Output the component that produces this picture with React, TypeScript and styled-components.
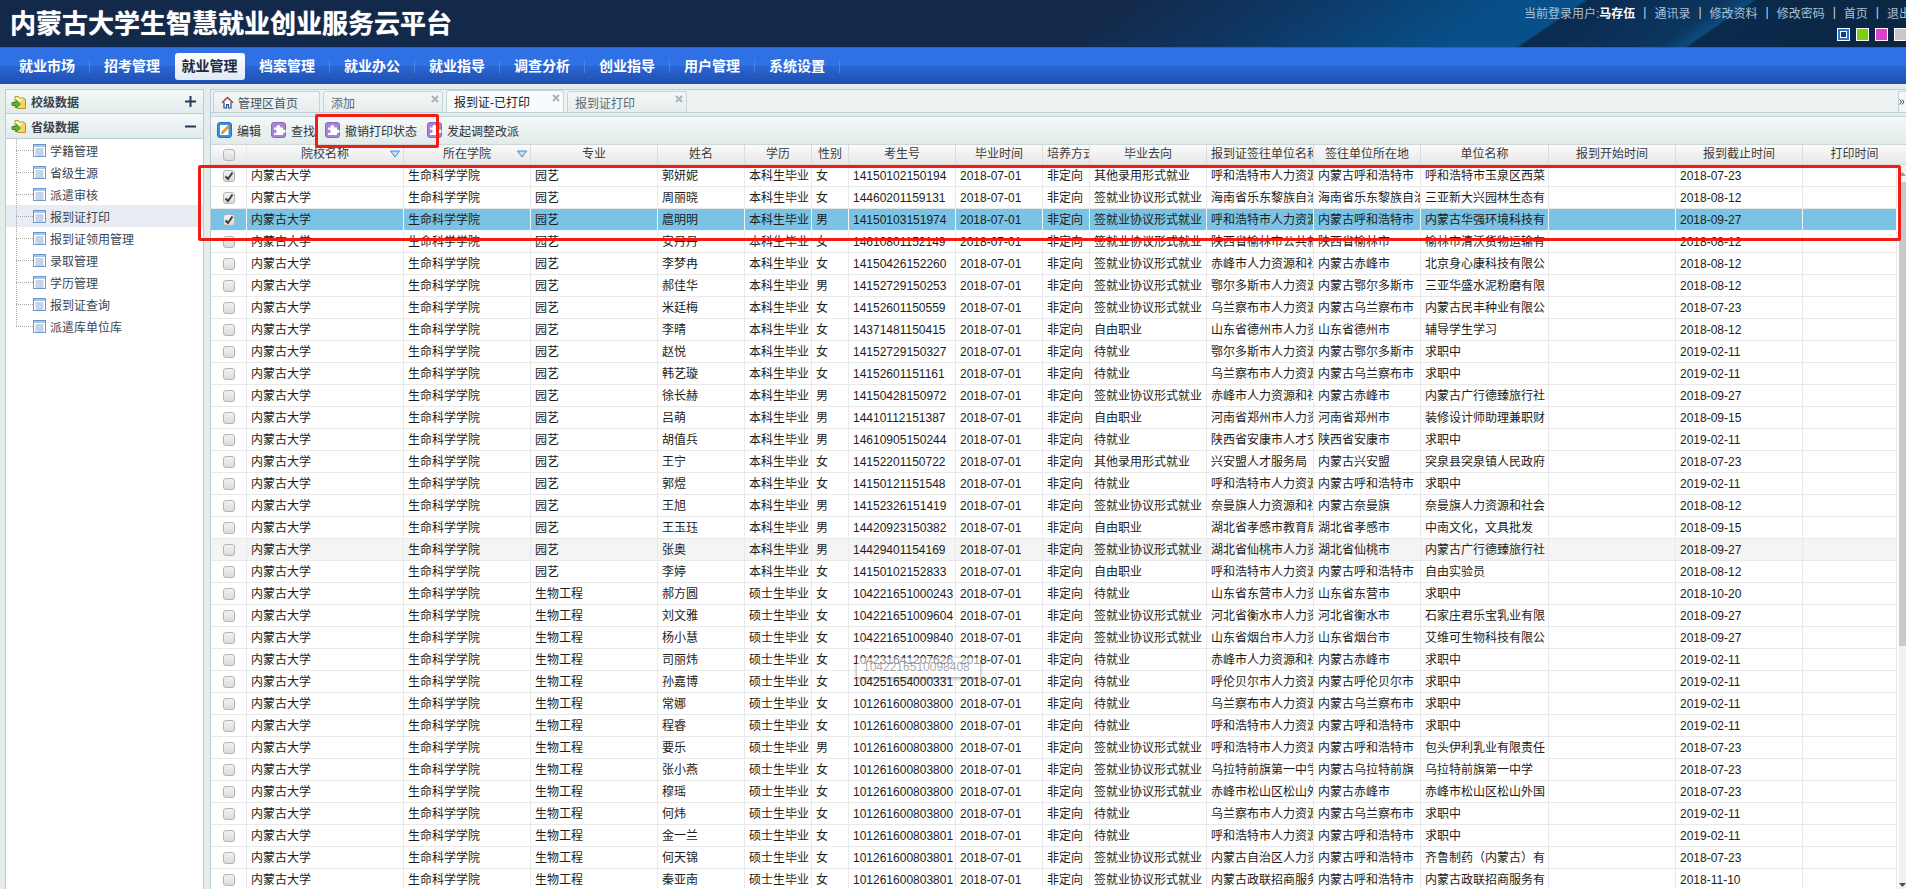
import React from 'react';
import styled, { createGlobalStyle } from 'styled-components';

const GlobalStyle = createGlobalStyle`
    html, body {
        margin: 0;
        padding: 0;
        height: 100%;
        overflow: hidden;
        background: #e4ecec;
        font-family: "Liberation Sans", "Noto Sans CJK SC", sans-serif;
        font-size: 12px;
        color: #222;
    }
    #root { height: 100%; }
`;

const Page = styled.div`
    position: relative;
    display: flex;
    flex-direction: column;
    height: 889px;
    overflow: hidden;
`;

const TopBar = styled.div`
    flex: none;
    box-sizing: border-box;
    height: 48px;
    display: flex;
    justify-content: space-between;
    overflow: hidden;
    border-bottom: 1px solid #46617e;
    background: linear-gradient(145.6deg, #13294a 0, #13294a 640px, #0e3866 740px, #07508a 860px, #07508a 895px, #0b2a4e 898px, #0b3660 975px, #0d4a7c 990px, #0a2a4c 993px, #0a2542 100%);
`;

const Title = styled.h1`
    margin: 0;
    padding-left: 10px;
    font-size: 26px;
    line-height: 49px;
    font-weight: 700;
    color: #fff;
    white-space: nowrap;
    text-shadow: 0 0 1px rgba(255,255,255,0.7);
`;

const UserBlock = styled.div`
    display: flex;
    flex-direction: column;
    align-items: flex-end;
    margin-right: -5px;
`;

const UserLinks = styled.div`
    display: flex;
    align-items: center;
    height: 24px;
    color: #a9c2d6;
    white-space: nowrap;
`;

const UserName = styled.b`
    color: #fff;
`;

const LinkSep = styled.span`
    margin: 0 8px;
    color: #c8d8e4;
`;

const Swatches = styled.div`
    display: flex;
    gap: 6px;
    margin-top: 4px;
    margin-right: 4px;
`;

const Swatch = styled.span<{ $color: string; $current?: boolean }>`
    box-sizing: border-box;
    width: 13px;
    height: 13px;
    border: 1px solid #fff;
    background: ${p => p.$color};
    display: flex;
    align-items: center;
    justify-content: center;
    &::after {
        content: "";
        display: ${p => (p.$current ? 'block' : 'none')};
        width: 5px;
        height: 5px;
        border: 1px solid #fff;
        background: #0e3f80;
    }
`;

const Nav = styled.div`
    flex: none;
    height: 36px;
    display: flex;
    align-items: center;
    padding-left: 5px;
    background: linear-gradient(#2f70e4 0, #2f70e4 50%, #2a66d4 50%, #1f4fae 100%);
`;

const NavCell = styled.div<{ $sep?: boolean; $active?: boolean }>`
    box-sizing: border-box;
    width: ${p => (p.$active ? 70 : 85)}px;
    height: 14px;
    display: flex;
    align-items: center;
    justify-content: center;
    border-right: 1px solid ${p => (p.$sep ? '#4f7fd8' : 'transparent')};
`;

const NavLabel = styled.span<{ $active?: boolean }>`
    padding: 6px 7px;
    font-size: 14px;
    line-height: 15px;
    font-weight: 700;
    white-space: nowrap;
    border-radius: 3px;
    color: ${p => (p.$active ? '#1d2a3c' : '#fff')};
    background: ${p => (p.$active ? 'linear-gradient(#ffffff, #dfe9f7)' : 'none')};
`;

const Main = styled.div`
    flex: 1;
    min-height: 0;
    display: flex;
    gap: 6px;
    padding: 5px 0 0 5px;
`;

const Sidebar = styled.div`
    flex: none;
    box-sizing: border-box;
    width: 199px;
    border: 1px solid #b7ccd3;
    border-bottom: 0;
    background: #fff;
`;

const AccordionHead = styled.div`
    box-sizing: border-box;
    height: 25px;
    display: flex;
    align-items: center;
    gap: 4px;
    padding: 0 7px 0 5px;
    border-bottom: 1px solid #b7ccd3;
    background: linear-gradient(#f6f9f9, #e2ebeb);
    color: #39424c;
    font-weight: 700;
    &:first-of-type { height: 24px; }
`;

const AccordionLabel = styled.span`
    flex: 1;
`;

const TreeRow = styled.div<{ $selected?: boolean; $last?: boolean }>`
    height: 22px;
    display: flex;
    align-items: center;
    background: ${p => (p.$selected ? '#e8edf3' : 'transparent')};
    color: #3c4652;
    &::before {
        content: "";
        flex: none;
        width: 17px;
        height: 100%;
        margin-left: 10px;
        background:
            repeating-linear-gradient(to right, #aaa 0 1px, transparent 1px 2px) 0 50% / 100% 1px no-repeat,
            repeating-linear-gradient(to bottom, #aaa 0 1px, transparent 1px 2px) 0 0 / 1px ${p => (p.$last ? '50%' : '100%')} no-repeat;
    }
`;

const TreeText = styled.span`
    margin-left: 4px;
`;

const Content = styled.div`
    flex: 1;
    min-width: 0;
    display: flex;
    flex-direction: column;
    border-left: 1px solid #b7ccd3;
    border-top: 1px solid #b7ccd3;
`;

const TabBar = styled.div`
    flex: none;
    box-sizing: border-box;
    height: 22px;
    display: flex;
    align-items: flex-end;
    gap: 3px;
    padding-left: 2px;
    background: #edf3f3;
`;

const Tab = styled.div<{ $active?: boolean; $width: number }>`
    position: relative;
    box-sizing: border-box;
    width: ${p => p.$width}px;
    height: ${p => (p.$active ? 22 : 21)}px;
    display: flex;
    align-items: center;
    gap: 4px;
    padding-left: 7px;
    border: 1px solid #c3d4d9;
    border-bottom: 0;
    border-radius: 3px 3px 0 0;
    color: ${p => (p.$active ? '#222' : '#5e6873')};
    background: ${p => (p.$active ? '#f8fbfb' : 'linear-gradient(#f4f7f7, #e6eded)')};
    white-space: nowrap;
`;

const HomeTabText = styled.span`
    color: #4a5561;
`;

const TabClose = styled.svg`
    position: absolute;
    top: 3px;
    right: 3px;
    width: 8px;
    height: 8px;
`;

const TabScroller = styled.div`
    margin-left: auto;
    box-sizing: border-box;
    width: 8px;
    height: 21px;
    overflow: hidden;
    border-left: 1px solid #c3d4d9;
    border-top: 1px solid #c3d4d9;
    background: #f4f7f7;
    display: flex;
    align-items: center;
`;

const TabStrip = styled.div`
    flex: none;
    box-sizing: border-box;
    height: 5px;
    border-top: 1px solid #bfd0d5;
    border-bottom: 1px solid #c6d5d9;
    background: #e4ecec;
`;

const Toolbar = styled.div`
    flex: none;
    box-sizing: border-box;
    height: 27px;
    display: flex;
    align-items: center;
    gap: 10px;
    padding: 0 0 1px 6px;
    background: linear-gradient(#f4f8f8, #e2ebeb);
`;

const ToolButton = styled.div`
    display: flex;
    align-items: center;
    gap: 5px;
    color: #333;
    white-space: nowrap;
`;

const COLUMNS = '36px 157px 127px 127px 87px 67px 37px 107px 87px 47px 117px 107px 107px 128px 127px 127px 1fr';

const HeaderRow = styled.div`
    flex: none;
    box-sizing: border-box;
    height: 21px;
    display: grid;
    grid-template-columns: ${COLUMNS};
    border-top: 1px solid #ccd8da;
    border-bottom: 1px solid #dcdcdc;
    background: linear-gradient(#fbfbfb, #e7e7e7);
`;

const HeaderCell = styled.div`
    position: relative;
    padding: 0 4px;
    line-height: 19px;
    text-align: center;
    color: #3b3b3b;
    white-space: nowrap;
    overflow: hidden;
    border-right: 1px solid #dcdcdc;
    &:last-child { border-right: 0; }
`;

const SortMark = styled.svg`
    position: absolute;
    top: 5px;
    right: 3px;
    width: 10px;
    height: 8px;
`;

const BodyArea = styled.div`
    flex: 1;
    min-height: 0;
    display: flex;
`;

const Rows = styled.div`
    flex: 1;
    min-width: 0;
    overflow: hidden;
    background: #fff;
`;

const Row = styled.div<{ $selected?: boolean; $hover?: boolean }>`
    box-sizing: border-box;
    height: 22px;
    margin-right: 2px;
    display: grid;
    grid-template-columns: ${COLUMNS};
    border-bottom: 1px solid ${p => (p.$selected ? '#f2f7fa' : '#e9e9e9')};
    background: ${p => (p.$selected ? '#7bc3e5' : p.$hover ? '#f4f4f4' : '#fff')};
`;

const Cell = styled.div<{ $selected?: boolean }>`
    padding: 0 4px;
    height: 21px;
    line-height: 22px;
    color: #1c1c1c;
    white-space: nowrap;
    overflow: hidden;
    border-right: 1px solid ${p => (p.$selected ? '#f2f7fa' : '#e9e9e9')};
`;

const CheckCell = styled.div<{ $selected?: boolean }>`
    display: flex;
    align-items: center;
    justify-content: center;
    border-right: 1px solid ${p => (p.$selected ? '#f2f7fa' : '#e9e9e9')};
`;

const CheckBox = styled.span`
    box-sizing: border-box;
    width: 12px;
    height: 12px;
    display: flex;
    align-items: center;
    justify-content: center;
    border: 1px solid #b4b4b4;
    border-radius: 3px;
    background: linear-gradient(#f2f2f2, #dcdcdc);
`;

const Scrollbar = styled.div`
    flex: none;
    width: 7px;
    display: flex;
    flex-direction: column;
    background: #f1f1f1;
`;

const ScrollArrow = styled.svg`
    flex: none;
    width: 7px;
    height: 17px;
`;

const ScrollThumb = styled.div`
    flex: none;
    height: 464px;
    background: #c9c9c9;
`;

const ScrollTrack = styled.div`
    flex: 1;
`;

/* the two red marks somebody drew on the screenshot */
const ButtonMark = styled.div`
    position: absolute;
    box-sizing: border-box;
    left: 315px;
    top: 114px;
    width: 124px;
    height: 34px;
    border: 3px solid #f21c12;
    border-radius: 2px;
`;

const RowsMark = styled.div`
    position: absolute;
    box-sizing: border-box;
    left: 198px;
    top: 165px;
    width: 1703px;
    height: 76px;
    border: 3px solid #f21c12;
    border-radius: 2px;
`;

const DragTip = styled.div`
    position: absolute;
    box-sizing: border-box;
    left: 857px;
    top: 658px;
    width: 123px;
    height: 19px;
    padding-left: 6px;
    line-height: 19px;
    color: rgba(90,90,90,0.55);
    background: rgba(255,255,255,0.55);
    box-shadow: 0 1px 4px rgba(0,0,0,0.45);
`;

const FolderIcon = () => (
    <svg width="16" height="16" viewBox="0 0 16 16">
        <path d="M4 2.5h3.5l1 1.5h4v9.5H4Z" fill="#fdf0b8" stroke="#b8962c" />
        <path d="M12.5 4l2 1.5v9H6.5l-1-1" fill="#f4d468" stroke="#b8962c" />
        <path d="M1 8.5h4V6l4.5 4-4.5 4v-2.5H1Z" fill="#58b82c" stroke="#2c7a14" strokeWidth="0.8" />
    </svg>
);

const PlusIcon = () => (
    <svg width="11" height="11" viewBox="0 0 11 11">
        <path d="M0 5.5h11M5.5 0v11" stroke="#1f3a5c" strokeWidth="2" />
    </svg>
);

const MinusIcon = () => (
    <svg width="11" height="11" viewBox="0 0 11 11">
        <path d="M0 5.5h11" stroke="#1f3a5c" strokeWidth="2" />
    </svg>
);

const ListIcon = () => (
    <svg width="13" height="13" viewBox="0 0 13 13">
        <rect x="0.5" y="0.5" width="12" height="12" fill="#fff" stroke="#6c96cc" />
        <rect x="1" y="1" width="11" height="2" fill="#a9c4e6" />
        <path d="M2.5 5h8M2.5 7h8M2.5 9h8M2.5 11h8" stroke="#88a8d2" />
    </svg>
);

const HomeIcon = () => (
    <svg width="13" height="13" viewBox="0 0 13 13">
        <path d="M3 6v6h2.5V8.5h2V12H10V6" fill="#fff" stroke="#234f8c" strokeWidth="1.2" />
        <path d="M1 6.8 6.5 1.5 12 6.8" fill="none" stroke="#a04040" strokeWidth="1.4" />
    </svg>
);

const EditIcon = () => (
    <svg width="15" height="16" viewBox="0 0 15 16">
        <rect x="0.5" y="0.5" width="14" height="15" rx="2.5" fill="#3d8fe6" stroke="#2a6cc0" />
        <rect x="3" y="3" width="8.5" height="10" fill="#fff" />
        <path d="M4.5 12 5 9.5 11 3.5l1.6 1.6L6.6 11Z" fill="#f09a20" stroke="#b86a10" strokeWidth="0.5" />
    </svg>
);

const PuzzleIcon = () => (
    <svg width="15" height="16" viewBox="0 0 15 16">
        <rect x="0.5" y="0.5" width="14" height="15" rx="2.5" fill="#a884d6" stroke="#8c68bc" />
        <path d="M3 5.5h2.6a1.9 1.9 0 1 1 3.6 0H12v2.4a1.7 1.7 0 1 1 0 2.8V13H3v-2.3a1.7 1.7 0 1 0 0-2.8Z" fill="#fff" />
    </svg>
);

const CheckMark = () => (
    <svg width="10" height="10" viewBox="0 0 10 10">
        <path d="M1.5 5.5 4 8 8.5 1.5" fill="none" stroke="#3c3c3c" strokeWidth="2" />
    </svg>
);

const CloseMark = () => (
    <TabClose viewBox="0 0 8 8">
        <path d="M1 1l6 6M7 1 1 7" stroke="#a9b4bc" strokeWidth="2" />
    </TabClose>
);

const SortArrow = () => (
    <SortMark viewBox="0 0 10 8">
        <path d="M0.5 1h9L5 7Z" fill="#bfe0f5" stroke="#3f8fc8" />
    </SortMark>
);

const navItems = ['就业市场', '招考管理', '就业管理', '档案管理', '就业办公', '就业指导', '调查分析', '创业指导', '用户管理', '系统设置'];
const treeItems = ['学籍管理', '省级生源', '派遣审核', '报到证打印', '报到证领用管理', '录取管理', '学历管理', '报到证查询', '派遣库单位库'];
const headers = ['院校名称', '所在学院', '专业', '姓名', '学历', '性别', '考生号', '毕业时间', '培养方式', '毕业去向', '报到证签往单位名称', '签往单位所在地', '单位名称', '报到开始时间', '报到截止时间', '打印时间'];

const SIGN = '签就业协议形式就业';
const OTHER = '其他录用形式就业';
const FREE = '自由职业';
const WAIT = '待就业';
const SEEK = '求职中';
const HOHHOT = '呼和浩特市人力资源和社会保障局';
const ULANQAB = '乌兰察布市人力资源和社会保障局';
const ORDOS = '鄂尔多斯市人力资源和社会保障局';
const CHIFENG = '赤峰市人力资源和社会保障局';

// 姓名, 性别, 考生号, 去向, 签往单位, 所在地, 单位名称, 截止时间
const students = [
    ['郭妍妮', '女', '14150102150194', OTHER, HOHHOT, '内蒙古呼和浩特市', '呼和浩特市玉泉区西菜', '2018-07-23'],
    ['周丽晓', '女', '14460201159131', SIGN, '海南省乐东黎族自治县人力', '海南省乐东黎族自治县', '三亚新大兴园林生态有', '2018-08-12'],
    ['扈明明', '男', '14150103151974', SIGN, HOHHOT, '内蒙古呼和浩特市', '内蒙古华强环境科技有', '2018-09-27'],
    ['安丹丹', '女', '14610801152149', SIGN, '陕西省榆林市公共就业服务', '陕西省榆林市', '榆林市清沃货物运输有', '2018-08-12'],
    ['李梦冉', '女', '14150426152260', SIGN, CHIFENG, '内蒙古赤峰市', '北京身心康科技有限公', '2018-08-12'],
    ['郝佳华', '男', '14152729150253', SIGN, ORDOS, '内蒙古鄂尔多斯市', '三亚华盛水泥粉磨有限', '2018-08-12'],
    ['米廷梅', '女', '14152601150559', SIGN, ULANQAB, '内蒙古乌兰察布市', '内蒙古民丰种业有限公', '2018-07-23'],
    ['李晴', '女', '14371481150415', FREE, '山东省德州市人力资源', '山东省德州市', '辅导学生学习', '2018-08-12'],
    ['赵悦', '女', '14152729150327', WAIT, ORDOS, '内蒙古鄂尔多斯市', SEEK, '2019-02-11'],
    ['韩艺璇', '女', '14152601151161', WAIT, ULANQAB, '内蒙古乌兰察布市', SEEK, '2019-02-11'],
    ['徐长赫', '男', '14150428150972', SIGN, CHIFENG, '内蒙古赤峰市', '内蒙古广行德臻旅行社', '2018-09-27'],
    ['吕萌', '男', '14410112151387', FREE, '河南省郑州市人力资源', '河南省郑州市', '装修设计师助理兼职财', '2018-09-15'],
    ['胡值兵', '男', '14610905150244', WAIT, '陕西省安康市人才交流', '陕西省安康市', SEEK, '2019-02-11'],
    ['王宁', '女', '14152201150722', OTHER, '兴安盟人才服务局', '内蒙古兴安盟', '突泉县突泉镇人民政府', '2018-07-23'],
    ['郭煜', '女', '14150121151548', WAIT, HOHHOT, '内蒙古呼和浩特市', SEEK, '2019-02-11'],
    ['王旭', '男', '14152326151419', SIGN, '奈曼旗人力资源和社会保障局', '内蒙古奈曼旗', '奈曼旗人力资源和社会', '2018-08-12'],
    ['王玉珏', '男', '14420923150382', FREE, '湖北省孝感市教育局', '湖北省孝感市', '中南文化\uFF0C文具批发', '2018-09-15'],
    ['张奥', '男', '14429401154169', SIGN, '湖北省仙桃市人力资源', '湖北省仙桃市', '内蒙古广行德臻旅行社', '2018-09-27'],
    ['李婷', '女', '14150102152833', FREE, HOHHOT, '内蒙古呼和浩特市', '自由实验员', '2018-08-12'],
    ['郝方圆', '女', '104221651000243', WAIT, '山东省东营市人力资源', '山东省东营市', SEEK, '2018-10-20'],
    ['刘文雅', '女', '104221651009604', SIGN, '河北省衡水市人力资源', '河北省衡水市', '石家庄君乐宝乳业有限', '2018-09-27'],
    ['杨小慧', '女', '104221651009840', SIGN, '山东省烟台市人力资源', '山东省烟台市', '艾维可生物科技有限公', '2018-09-27'],
    ['司丽炜', '女', '104231641207626', WAIT, CHIFENG, '内蒙古赤峰市', SEEK, '2019-02-11'],
    ['孙嘉博', '女', '104251654000331', WAIT, '呼伦贝尔市人力资源和社会', '内蒙古呼伦贝尔市', SEEK, '2019-02-11'],
    ['常娜', '女', '101261600803800', WAIT, ULANQAB, '内蒙古乌兰察布市', SEEK, '2019-02-11'],
    ['程睿', '女', '101261600803800', WAIT, HOHHOT, '内蒙古呼和浩特市', SEEK, '2019-02-11'],
    ['要乐', '男', '101261600803800', SIGN, HOHHOT, '内蒙古呼和浩特市', '包头伊利乳业有限责任', '2018-07-23'],
    ['张小燕', '女', '101261600803800', SIGN, '乌拉特前旗第一中学校', '内蒙古乌拉特前旗', '乌拉特前旗第一中学', '2018-07-23'],
    ['穆瑶', '女', '101261600803800', SIGN, '赤峰市松山区松山外国语', '内蒙古赤峰市', '赤峰市松山区松山外国', '2018-07-23'],
    ['何炜', '女', '101261600803800', WAIT, ULANQAB, '内蒙古乌兰察布市', SEEK, '2019-02-11'],
    ['金一兰', '女', '101261600803801', WAIT, HOHHOT, '内蒙古呼和浩特市', SEEK, '2019-02-11'],
    ['何天锦', '女', '101261600803801', SIGN, '内蒙古自治区人力资源', '内蒙古呼和浩特市', '齐鲁制药\uFF08内蒙古\uFF09有', '2018-07-23'],
    ['秦亚南', '女', '101261600803801', SIGN, '内蒙古政联招商服务有限', '内蒙古呼和浩特市', '内蒙古政联招商服务有', '2018-11-10'],
];

const App = () => {
    return (
        <Page>
            <GlobalStyle />
            <TopBar>
                <Title>内蒙古大学生智慧就业创业服务云平台</Title>
                <UserBlock>
                    <UserLinks>
                        当前登录用户:<UserName>马存伍</UserName>
                        <LinkSep>|</LinkSep>通讯录
                        <LinkSep>|</LinkSep>修改资料
                        <LinkSep>|</LinkSep>修改密码
                        <LinkSep>|</LinkSep>首页
                        <LinkSep>|</LinkSep>退出
                    </UserLinks>
                    <Swatches>
                        <Swatch $color="#2a72d8" $current />
                        <Swatch $color="#7ccf10" />
                        <Swatch $color="#e040d0" />
                        <Swatch $color="#c8c8c8" />
                    </Swatches>
                </UserBlock>
            </TopBar>
            <Nav>
                {navItems.map((item, i) => (
                    <NavCell key={item} $sep={i !== 1 && i !== 2} $active={i === 2}>
                        <NavLabel $active={i === 2}>{item}</NavLabel>
                    </NavCell>
                ))}
            </Nav>
            <Main>
                <Sidebar>
                    <AccordionHead>
                        <FolderIcon />
                        <AccordionLabel>校级数据</AccordionLabel>
                        <PlusIcon />
                    </AccordionHead>
                    <AccordionHead>
                        <FolderIcon />
                        <AccordionLabel>省级数据</AccordionLabel>
                        <MinusIcon />
                    </AccordionHead>
                    {treeItems.map((item, i) => (
                        <TreeRow key={item} $selected={i === 3} $last={i === treeItems.length - 1}>
                            <ListIcon />
                            <TreeText>{item}</TreeText>
                        </TreeRow>
                    ))}
                </Sidebar>
                <Content>
                    <TabBar>
                        <Tab $width={107}>
                            <HomeIcon />
                            <HomeTabText>管理区首页</HomeTabText>
                        </Tab>
                        <Tab $width={120}>添加<CloseMark /></Tab>
                        <Tab $width={118} $active>报到证-已打印<CloseMark /></Tab>
                        <Tab $width={120}>报到证打印<CloseMark /></Tab>
                        <TabScroller>
                            <svg width="14" height="12" viewBox="0 0 14 12">
                                <path d="M1 1l4 5-4 5M6 1l4 5-4 5" fill="none" stroke="#1f2c3c" strokeWidth="1.6" />
                            </svg>
                        </TabScroller>
                    </TabBar>
                    <TabStrip />
                    <Toolbar>
                        <ToolButton><EditIcon />编辑</ToolButton>
                        <ToolButton><PuzzleIcon />查找</ToolButton>
                        <ToolButton><PuzzleIcon />撤销打印状态</ToolButton>
                        <ToolButton><PuzzleIcon />发起调整改派</ToolButton>
                    </Toolbar>
                    <HeaderRow>
                        <CheckCell><CheckBox /></CheckCell>
                        {headers.map((h, i) => (
                            <HeaderCell key={h}>
                                {h}
                                {i < 2 && <SortArrow />}
                            </HeaderCell>
                        ))}
                    </HeaderRow>
                    <BodyArea>
                        <Rows>
                            {students.map((s, i) => {
                                const selected = i === 2;
                                return (
                                    <Row key={s[0]} $selected={selected} $hover={i === 17}>
                                        <CheckCell $selected={selected}>
                                            <CheckBox>{i < 3 && <CheckMark />}</CheckBox>
                                        </CheckCell>
                                        <Cell $selected={selected}>内蒙古大学</Cell>
                                        <Cell $selected={selected}>生命科学学院</Cell>
                                        <Cell $selected={selected}>{i < 19 ? '园艺' : '生物工程'}</Cell>
                                        <Cell $selected={selected}>{s[0]}</Cell>
                                        <Cell $selected={selected}>{i < 19 ? '本科生毕业' : '硕士生毕业'}</Cell>
                                        <Cell $selected={selected}>{s[1]}</Cell>
                                        <Cell $selected={selected}>{s[2]}</Cell>
                                        <Cell $selected={selected}>2018-07-01</Cell>
                                        <Cell $selected={selected}>非定向</Cell>
                                        <Cell $selected={selected}>{s[3]}</Cell>
                                        <Cell $selected={selected}>{s[4]}</Cell>
                                        <Cell $selected={selected}>{s[5]}</Cell>
                                        <Cell $selected={selected}>{s[6]}</Cell>
                                        <Cell $selected={selected} />
                                        <Cell $selected={selected}>{s[7]}</Cell>
                                        <Cell $selected={selected} />
                                    </Row>
                                );
                            })}
                        </Rows>
                        <Scrollbar>
                            <ScrollArrow viewBox="0 0 7 17">
                                <path d="M3.5 7 7 11H0Z" fill="#a0a0a0" />
                            </ScrollArrow>
                            <ScrollThumb />
                            <ScrollTrack />
                            <ScrollArrow viewBox="0 0 7 17">
                                <path d="M3.5 15 7 11H0Z" fill="#505050" />
                            </ScrollArrow>
                        </Scrollbar>
                    </BodyArea>
                </Content>
            </Main>
            <ButtonMark />
            <RowsMark />
            <DragTip>1042216510098408</DragTip>
        </Page>
    );
};

export default App;
